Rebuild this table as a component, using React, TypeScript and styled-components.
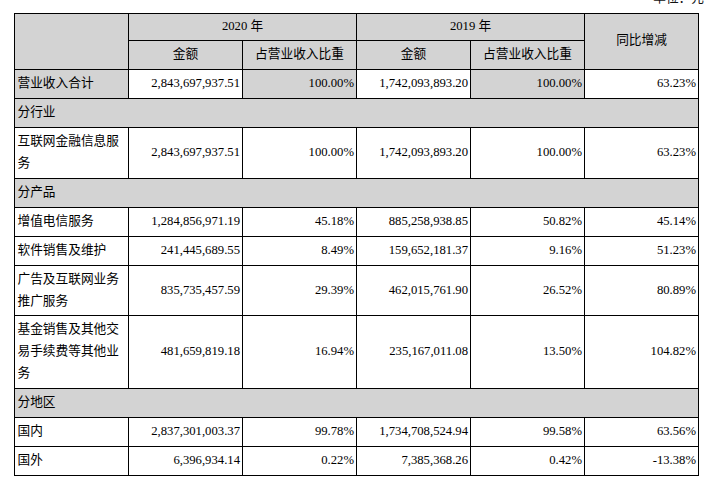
import React from "react";
import styled, { createGlobalStyle } from "styled-components";

const GlobalStyle = createGlobalStyle`
  html, body {
    margin: 0;
    padding: 0;
    background: #ffffff;
  }
  body {
    font-family: "Liberation Serif", "Noto Sans CJK SC", serif;
    color: #000;
  }
`;

const Page = styled.div`
  width: 720px;
  height: 478px;
  overflow: hidden;
  padding-left: 14px;
  box-sizing: border-box;
`;

const Unit = styled.div`
  width: 690px;
  height: 14px;
  margin-top: -9px;
  margin-bottom: 7.5px;
  font-size: 12.7px;
  line-height: 14px;
  text-align: right;
  color: #111;
`;

const Table = styled.table`
  width: 684px;
  table-layout: fixed;
  border-collapse: collapse;
  font-size: 12.7px;
  line-height: 21.9px;
`;

const Col = styled.col`
  width: 114px;
`;

const Head = styled.th<{ $tall?: boolean }>`
  font-weight: normal;
  text-align: center;
  vertical-align: middle;
  background: #d3d3d3;
  border: 1px solid #000;
  padding: ${(p) => (p.$tall ? "3px 2px" : "2.5px 2px")};
`;

const Cell = styled.td<{ $align?: "left" | "right"; $shade?: boolean }>`
  text-align: ${(p) => p.$align ?? "right"};
  vertical-align: middle;
  background: ${(p) => (p.$shade ? "#d3d3d3" : "#ffffff")};
  border: 1px solid #000;
  padding: 3px 2px 3px 2.5px;
  word-break: break-all;
`;

const Section = styled.td`
  text-align: left;
  vertical-align: middle;
  background: #d3d3d3;
  border: 1px solid #000;
  padding: 3px 2px 3px 2.5px;
`;

type Row =
  | { kind: "section"; label: string }
  | { kind: "data"; label: string; v: [string, string, string, string, string]; total?: boolean };

const rows: Row[] = [
  { kind: "data", label: "营业收入合计", v: ["2,843,697,937.51", "100.00%", "1,742,093,893.20", "100.00%", "63.23%"], total: true },
  { kind: "section", label: "分行业" },
  { kind: "data", label: "互联网金融信息服务", v: ["2,843,697,937.51", "100.00%", "1,742,093,893.20", "100.00%", "63.23%"] },
  { kind: "section", label: "分产品" },
  { kind: "data", label: "增值电信服务", v: ["1,284,856,971.19", "45.18%", "885,258,938.85", "50.82%", "45.14%"] },
  { kind: "data", label: "软件销售及维护", v: ["241,445,689.55", "8.49%", "159,652,181.37", "9.16%", "51.23%"] },
  { kind: "data", label: "广告及互联网业务推广服务", v: ["835,735,457.59", "29.39%", "462,015,761.90", "26.52%", "80.89%"] },
  { kind: "data", label: "基金销售及其他交易手续费等其他业务", v: ["481,659,819.18", "16.94%", "235,167,011.08", "13.50%", "104.82%"] },
  { kind: "section", label: "分地区" },
  { kind: "data", label: "国内", v: ["2,837,301,003.37", "99.78%", "1,734,708,524.94", "99.58%", "63.56%"] },
  { kind: "data", label: "国外", v: ["6,396,934.14", "0.22%", "7,385,368.26", "0.42%", "-13.38%"] },
];

export default function App() {
  return (
    <>
      <GlobalStyle />
      <Page>
        <Unit>单位：元</Unit>
        <Table>
          <colgroup>
            <Col />
            <Col />
            <Col />
            <Col />
            <Col />
            <Col />
          </colgroup>
          <thead>
            <tr>
              <Head rowSpan={2} />
              <Head colSpan={2}>2020 年</Head>
              <Head colSpan={2}>2019 年</Head>
              <Head rowSpan={2}>同比增减</Head>
            </tr>
            <tr>
              <Head $tall>金额</Head>
              <Head $tall>占营业收入比重</Head>
              <Head $tall>金额</Head>
              <Head $tall>占营业收入比重</Head>
            </tr>
          </thead>
          <tbody>
            {rows.map((r, i) =>
              r.kind === "section" ? (
                <tr key={i}>
                  <Section colSpan={6}>{r.label}</Section>
                </tr>
              ) : (
                <tr key={i}>
                  <Cell $align="left" $shade={r.total}>{r.label}</Cell>
                  <Cell>{r.v[0]}</Cell>
                  <Cell $shade={r.total}>{r.v[1]}</Cell>
                  <Cell>{r.v[2]}</Cell>
                  <Cell $shade={r.total}>{r.v[3]}</Cell>
                  <Cell>{r.v[4]}</Cell>
                </tr>
              )
            )}
          </tbody>
        </Table>
      </Page>
    </>
  );
}
